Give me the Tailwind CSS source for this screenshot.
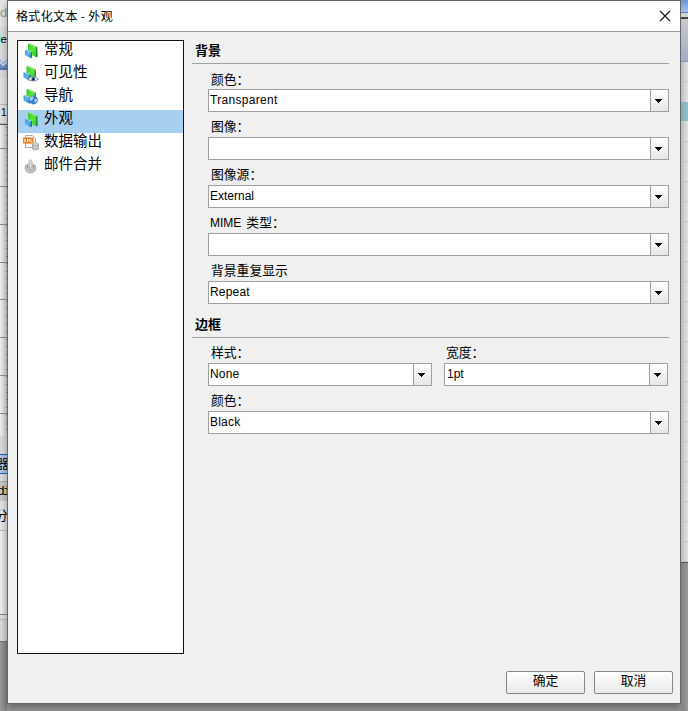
<!DOCTYPE html>
<html lang="zh-CN">
<head>
<meta charset="utf-8">
<title>格式化文本 - 外观</title>
<script src="https://cdn.jsdelivr.net/npm/@tailwindcss/browser@4"></script>
</head>
<body class="w-[688px] h-[711px] overflow-hidden bg-[#969696] text-black font-['Liberation_Sans','Noto_Sans_CJK_SC',sans-serif]">
<svg width="0" height="0" class="absolute">
  <defs>
    <linearGradient id="green" x1="0" y1="0" x2="1" y2="1"><stop offset="0" stop-color="#2fc02c"/><stop offset=".5" stop-color="#5be838"/><stop offset="1" stop-color="#2fc52c"/></linearGradient>
    <linearGradient id="blue" x1="0" y1="0" x2="1" y2="1"><stop offset="0" stop-color="#2f93d3"/><stop offset=".5" stop-color="#5cb8ee"/><stop offset="1" stop-color="#2379bb"/></linearGradient>
    <g id="cubes">
      <path d="M4 .8l8 3.500v10L4 10z" fill="url(#green)"/>
      <path d="M4 .8L5.500 0l7.500 3.500-1 .8z" fill="#8be878"/>
      <path d="M12 4.300l1.300-.6.400 9.800-1.700 1z" fill="#188f2b"/>
      <path d="M1 7l5.800 2.500v5.800L1 12z" fill="url(#blue)"/>
      <path d="M1 7l1.300-.8L8 8.800l-1.200.7z" fill="#8bcdf0"/>
      <path d="M6.800 9.500L8 8.800v5.700l-1.200.8z" fill="#1b699f"/>
    </g>
    <path id="arrow" d="M0 0h7v1H0zM1 1h5v1H1zM2 2h3v1H2zM3 3h1v1H3z" fill="#000" shape-rendering="crispEdges"/>
  </defs>
</svg>
<div class="flex w-[688px] h-[711px]">
  <!-- window behind, left edge -->
  <div class="w-[7px] h-full shrink-0 overflow-hidden flex flex-col bg-linear-to-r from-[#9b9b9b] to-[#828282] text-[13px] leading-none whitespace-nowrap">
    <div class="h-[27px] shrink-0 bg-[#e6e6e6] text-[#999] pt-[6px]">d</div>
    <div class="h-[25px] shrink-0 bg-[#dedede] pt-[7px] flex"><span class="w-px h-[11px] bg-[#8ff0ee]"></span><span class="text-[11.500px]">e</span></div>
    <div class="h-[26px] shrink-0 bg-[#dcdde2] pt-[7px]">
      <svg width="7" height="11"><path d="M0 0l3 4 4-3v10H0z" fill="#6f8fc7"/><path d="M0 1l3 4 4-3v2L3 7 0 4z" fill="#d7e2f5"/><path d="M0 10h7" stroke="#3e5d97"/></svg>
    </div>
    <div class="h-[27px] shrink-0 bg-[#e3e3e5] border-b border-[#bbb]"></div>
    <div class="h-[19px] shrink-0 bg-[#e3e3e3] pl-px pt-[3px] text-[10px] border-b border-[#c2c2c2]">1</div>
    <div class="h-[312px] shrink-0 bg-linear-to-r from-[#f0f0f0] to-[#d2d2d2]">
      <svg width="7" height="312" shape-rendering="crispEdges">
        <path d="M0 .5h7" stroke="#555"/>
        <path d="M0 24.500h7M0 62.500h7M0 100.500h7M0 138.500h7M0 175.500h7M0 213.500h7M0 251.500h7M0 289.500h7" stroke="#8d8d8d"/>
        <path d="M6.500 3v309" stroke="#888" stroke-dasharray="1 6.560"/>
      </svg>
    </div>
    <div class="h-[18px] shrink-0 bg-[#dadada]"></div>
    <div class="h-[20px] shrink-0 bg-[#b1c5e2] border-y border-[#0c67b8] pt-[2px]"><span class="-ml-[4px]">器</span></div>
    <div class="h-[8px] shrink-0 bg-[#dedede] border-b border-[#aaa]"></div>
    <div class="h-[19px] shrink-0 bg-[#cacaca] font-['Liberation_Mono',monospace] tracking-[-1.500px] pt-[3px]"><span class="-ml-[3px]">di</span></div>
    <div class="h-[30px] shrink-0 bg-[#e5e5e5] pt-[8px] border-b border-[#bcbcbc]"><span class="-ml-[5px]">分</span></div>
    <div class="h-[84px] shrink-0 bg-linear-to-r from-[#f2f2f2] to-[#dadada] border-b border-[#888]"></div>
    <div class="h-[5px] shrink-0 bg-[#dedede] border-b border-[#bbb]"></div>
    <div class="h-[22px] shrink-0 bg-linear-to-r from-[#dedede] to-[#cfcfcf] border-b border-[#777]"></div>
  </div>

  <!-- dialog -->
  <div class="w-[674px] h-[704px] shrink-0 border border-[#666] bg-[#f0f0f0] flex flex-col shadow-[0_3px_8px_rgba(0,0,0,0.35)]">
    <div class="h-[31px] shrink-0 bg-white border-b border-[#9b9b9b] flex items-center justify-between pl-[8px] pr-[9px]">
      <span class="text-[12px] leading-[16px] tracking-[0.350px] whitespace-pre font-['Noto_Sans_CJK_SC',sans-serif]">格式化文本 - 外观</span>
      <svg width="12" height="12"><path d="M1 1l10 10M11 1L1 11" stroke="#111" stroke-width="1.100"/></svg>
    </div>
    <div class="flex pl-[9px] pt-[8px] h-[623px] shrink-0">
      <div class="w-[167px] h-[614px] shrink-0 bg-white border border-[#111] text-[14.500px] leading-[17px]">
        <div class="h-[23px] flex items-start pl-[6px] gap-[4px]"><svg width="16" height="16" class="mt-[2px]"><use href="#cubes"/></svg><span>常规</span></div>
        <div class="h-[23px] flex items-start pl-[6px] gap-[4px]"><svg width="16" height="16" class="mt-[2px] overflow-visible"><use href="#cubes" x="-1.500" y="-.5"/><path d="M4 13q5-5 10.500 0-5 4-10.500 0z" fill="#fff" stroke="#777" stroke-width=".8"/><circle cx="9.300" cy="12.900" r="2" fill="#2862a8"/><circle cx="9.300" cy="12.900" r="1" fill="#111"/></svg><span>可见性</span></div>
        <div class="h-[23px] flex items-start pl-[6px] gap-[4px]"><svg width="16" height="16" class="mt-[2px] overflow-visible"><use href="#cubes" x="-1.500" y="-.5"/><circle cx="9.500" cy="11" r="4.400" fill="#397fc5"/><path d="M6.500 8q2-1.500 3 0l-1 3-2 1-1-2zM11 9.500l2.500 1-1.500 3-2-1z" fill="#a9cff0"/></svg><span>导航</span></div>
        <div class="h-[23px] flex items-start pl-[6px] gap-[4px] bg-[#a6cff0]"><svg width="16" height="16" class="mt-[2px]"><use href="#cubes"/></svg><span>外观</span></div>
        <div class="h-[23px] flex items-start pl-[6px] gap-[4px]"><svg width="16" height="16" class="mt-[2px] overflow-visible"><path d="M1.500.5h7l3 3v9h-10z" fill="#fafafa" stroke="#aaa"/><rect x="-1" y="2.500" width="10.500" height="6" fill="#f07820"/><path d="M0 4l2 3M2 4L0 7M3.500 7V4l1 2 1-2v3M7 4v3h1.500" stroke="#fff" stroke-width=".8" fill="none"/><path d="M8.500 9v5q3 1.500 6 0V9z" fill="#c9c9c9" stroke="#999" stroke-width=".8"/><ellipse cx="11.500" cy="9" rx="3" ry="1.200" fill="#eee" stroke="#999" stroke-width=".8"/></svg><span>数据输出</span></div>
        <div class="h-[23px] flex items-start pl-[6px] gap-[4px]"><svg width="16" height="16" class="mt-[2px]"><path d="M3.500 6L1.500 8q-1 3 .7 5l2 1.500q2.300.8 4.600 0l2-1.500q1.700-2 .7-5l-2-2" fill="#d0d0d0" stroke="#a0a0a0" stroke-width="1"/><path d="M6.500 1.500L8 3.500v6q-1.500 1.500-3 0v-6z" fill="#e2e2e2" stroke="#999" stroke-width=".8"/><path d="M3.300 7v3.500q3.200 4 6.400 0V7" fill="none" stroke="#8f8f8f" stroke-width="1"/></svg><span>邮件合并</span></div>
      </div>
      <div class="ml-[8px] w-[477px] shrink-0 text-[12.800px] leading-[16px]">
        <h2 class="h-[24px] pl-[3px] pt-[3px] border-b border-[#a0a0a0] font-bold text-[13px] leading-[16px]">背景</h2>
        <div class="pl-[16px] pt-[1px]">
          <label class="block h-[24px] pt-[7px] pl-[3px]">颜色：</label>
          <div class="h-[23px] flex border border-[#a0a0a0] bg-white"><span class="grow pl-px pt-[2px] text-[12px] leading-[16px] tracking-[0.3px]">Transparent</span><span class="w-[18px] border-l border-[#a0a0a0] bg-linear-to-b from-white to-[#e6e6e6]"><svg width="7" height="4" class="ml-[4px] mt-[9px]"><use href="#arrow"/></svg></span></div>
          <label class="block h-[25px] pt-[7px] pl-[3px]">图像：</label>
          <div class="h-[23px] flex border border-[#a0a0a0] bg-white"><span class="grow"></span><span class="w-[18px] border-l border-[#a0a0a0] bg-linear-to-b from-white to-[#e6e6e6]"><svg width="7" height="4" class="ml-[4px] mt-[9px]"><use href="#arrow"/></svg></span></div>
          <label class="block h-[25px] pt-[7px] pl-[3px]">图像源：</label>
          <div class="h-[23px] flex border border-[#a0a0a0] bg-white"><span class="grow pl-px pt-[2px] text-[12px] leading-[16px]">External</span><span class="w-[18px] border-l border-[#a0a0a0] bg-linear-to-b from-white to-[#e6e6e6]"><svg width="7" height="4" class="ml-[4px] mt-[9px]"><use href="#arrow"/></svg></span></div>
          <label class="flex h-[25px] pt-[7px] pl-[2px] gap-[6px]"><span class="text-[12px]">MIME</span> <span class="-ml-px">类型：</span></label>
          <div class="h-[23px] flex border border-[#a0a0a0] bg-white"><span class="grow"></span><span class="w-[18px] border-l border-[#a0a0a0] bg-linear-to-b from-white to-[#e6e6e6]"><svg width="7" height="4" class="ml-[4px] mt-[9px]"><use href="#arrow"/></svg></span></div>
          <label class="block h-[25px] pt-[7px] pl-[3px]">背景重复显示</label>
          <div class="h-[23px] flex border border-[#a0a0a0] bg-white"><span class="grow pl-px pt-[2px] text-[12px] leading-[16px] tracking-[0.2px]">Repeat</span><span class="w-[18px] border-l border-[#a0a0a0] bg-linear-to-b from-white to-[#e6e6e6]"><svg width="7" height="4" class="ml-[4px] mt-[9px]"><use href="#arrow"/></svg></span></div>
        </div>
        <h2 class="h-[34px] pl-[3px] pt-[13px] border-b border-[#a0a0a0] font-bold text-[13px] leading-[16px]">边框</h2>
        <div class="pl-[16px]">
          <div class="flex gap-[12px]">
            <div class="w-[224px]">
              <label class="block h-[25px] pt-[7px] pl-[3px]">样式：</label>
              <div class="h-[23px] flex border border-[#a0a0a0] bg-white"><span class="grow pl-px pt-[2px] text-[12px] leading-[16px] tracking-[0.2px]">None</span><span class="w-[18px] border-l border-[#a0a0a0] bg-linear-to-b from-white to-[#e6e6e6]"><svg width="7" height="4" class="ml-[4px] mt-[9px]"><use href="#arrow"/></svg></span></div>
            </div>
            <div class="w-[224px]">
              <label class="block h-[25px] pt-[7px] pl-[2px]">宽度：</label>
              <div class="h-[23px] flex border border-[#a0a0a0] bg-white"><span class="grow pl-[2px] pt-[2px] text-[12px] leading-[16px]">1pt</span><span class="w-[18px] border-l border-[#a0a0a0] bg-linear-to-b from-white to-[#e6e6e6]"><svg width="7" height="4" class="ml-[4px] mt-[9px]"><use href="#arrow"/></svg></span></div>
            </div>
          </div>
          <label class="block h-[25px] pt-[7px] pl-[3px]">颜色：</label>
          <div class="h-[23px] flex border border-[#a0a0a0] bg-white"><span class="grow pl-px pt-[2px] text-[12px] leading-[16px] tracking-[0.2px]">Black</span><span class="w-[18px] border-l border-[#a0a0a0] bg-linear-to-b from-white to-[#e6e6e6]"><svg width="7" height="4" class="ml-[4px] mt-[9px]"><use href="#arrow"/></svg></span></div>
        </div>
      </div>
    </div>
    <div class="flex justify-end gap-[9px] pr-[7px] pt-[16px]">
      <button class="w-[79px] h-[23px] border border-[#868686] rounded-[2px] bg-linear-to-b from-white to-[#e9e9e9] text-[12.800px] leading-[16px] pb-[4px]">确定</button>
      <button class="w-[79px] h-[23px] border border-[#868686] rounded-[2px] bg-linear-to-b from-white to-[#e9e9e9] text-[12.800px] leading-[16px] pb-[4px]">取消</button>
    </div>
  </div>

  <!-- window behind, right edge -->
  <div class="grow h-full flex flex-col bg-linear-to-r from-[#808080] to-[#9a9a9a]">
    <div class="h-[13px] shrink-0 bg-linear-to-b from-[#6c94d2] to-[#a6c4ec] border-b border-[#5b79a8]"></div>
    <div class="h-[6px] shrink-0 bg-[#d5d5d5] border-b-2 border-[#444]"></div>
    <div class="h-[43px] shrink-0 bg-linear-to-b from-[#c9c9cb] to-[#a3adc0] border-b border-[#8795b2]"></div>
    <div class="h-[40px] shrink-0 bg-linear-to-r from-[#bcbcbc] to-[#e4e4e4]"><div class="h-[20px] border-b border-[#c4c4c4]"></div></div>
    <div class="h-[19px] shrink-0 bg-linear-to-r from-[#7facb8] to-[#94bfca]"></div>
    <div class="h-[442px] shrink-0 bg-linear-to-r from-[#bcbcbc] to-[#e4e4e4] border-b border-[#555]">
      <svg width="7" height="441" shape-rendering="crispEdges"><path d="M3.500 20v421" stroke="#c4c4c4" stroke-width="7" stroke-dasharray="1 19"/></svg>
    </div>
  </div>
</div>
</body>
</html>
